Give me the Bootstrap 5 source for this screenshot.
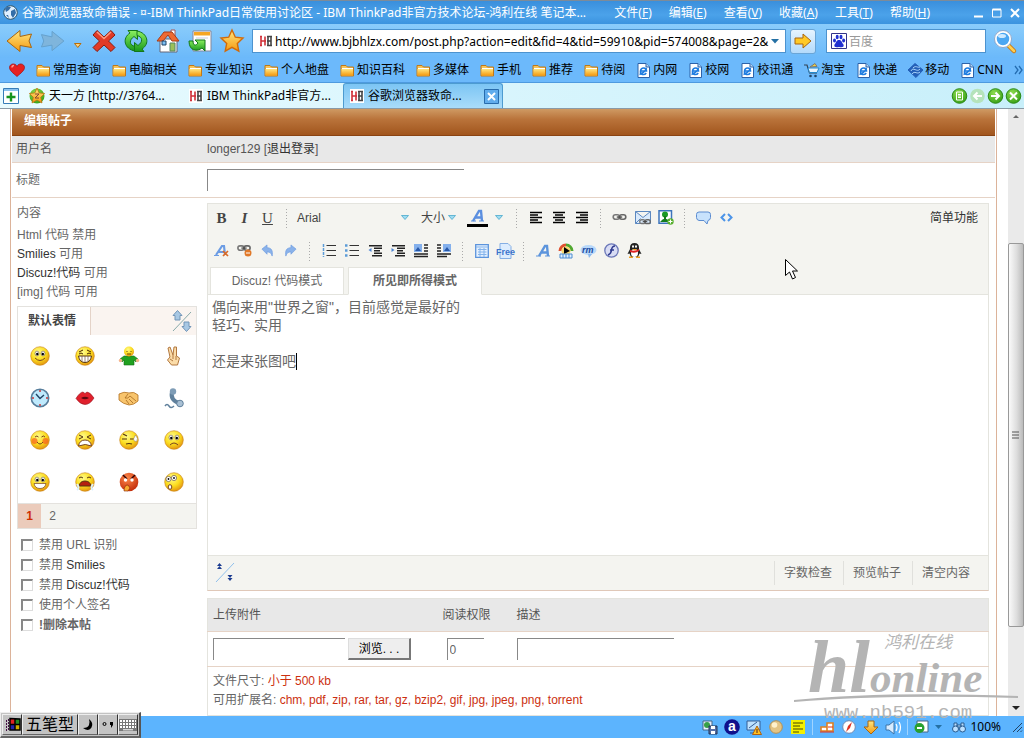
<!DOCTYPE html>
<html lang="zh-CN">
<head>
<meta charset="utf-8">
<meta name="viewport" content="width=device-width, initial-scale=1">
<title>谷歌浏览器致命错误</title>
<link rel="stylesheet" href="https://cdn.jsdelivr.net/npm/bootstrap@5.3.0/dist/css/bootstrap.min.css">
<style>
:root{--ui:"Noto Sans","Noto Sans CJK SC",sans-serif;--page:"Liberation Sans","Noto Sans CJK SC",sans-serif}
body{font:12px/18px var(--page);color:#666;background:#fff;height:100vh;overflow:hidden}
svg{display:block;flex:none;overflow:visible}
a{color:inherit;text-decoration:none}
button{padding:0;border:0;background:none;color:inherit;font:inherit;display:flex;align-items:center;justify-content:center}
input{font:inherit;color:inherit}
.chrome{font-family:var(--ui);color:#000;white-space:nowrap}
.titlebar{height:24px;background:linear-gradient(#3a8fdc,#4ba2ea 60%,#3b93df);color:#fff;border-top:1px solid #7d8b99;padding:0 4px 0 3px}
.titlebar h1{font-size:12px;line-height:18px;font-weight:400;margin:0}
.menus{gap:17px;margin-right:44px}
.tools{height:34px;background:linear-gradient(#8accfb,#6bb9fa);padding:0 8px 0 4px}
.tool{width:32px;height:32px}
.history{width:20px;margin-top:8px}
.address{border:1px solid #4c93cf;background:#fff;height:24px;padding:0 6px;min-width:0}
.address input{border:0;outline:0;background:none;min-width:0;font-size:12px;height:20px;padding:0 2px}
.address input::placeholder{color:#999}
.search{width:160px;padding-left:4px;margin-left:6px}
.go{width:26px;height:25px;border:1px solid #6aa5d6;border-radius:3px;background:linear-gradient(#e6f4ff,#b3dafb)}
.links{height:25px;background:#6cb9fb;padding-left:9px;border-bottom:1px solid #4e9adf}
.links a{gap:2px;margin-right:11px}
.tabs{height:26px;background:linear-gradient(90deg,#e8fbff,#c8effa);border-bottom:1px solid #8a9aa6;padding:0 3px}
.wtab{width:160px;height:25px;padding:0 3px 0 6px;gap:4px}
.wtab.on{background:linear-gradient(#7cc5f4,#a9dcfa);border:1px solid #4d9bd0;border-bottom:0;border-radius:3px 3px 0 0}
.doc{flex:1 1 0;min-height:0;overflow:hidden}
.sheet{margin:0 11px 0 10px;border:solid #dcb39a;border-width:0 1px;padding:0 1px}
.sheet h2{margin:0;height:27px;padding:0 12px;font-size:12px;line-height:24px;font-weight:700;color:#fff;background:linear-gradient(#cf9a63,#b9733a 40%,#a1551d);border-bottom:1px solid #8a4312}
.rule{border-bottom:1px solid #e6d3c6}
.name-col{flex:0 0 195px;padding-left:4px}
aside.name-col{padding:6px 0 0 5px}
.inset{border:solid #888;border-width:1px 0 0 1px;border-radius:0;background:#fff;outline:0;height:22px;padding:2px}
.hint{line-height:19px}
.dark{color:#333}
.smilies{width:180px;border:1px solid #e4e2de;margin-top:4px}
.smilies header{height:28px;background:#faf4f0;padding-right:4px}
.smilies header b{background:#fff;padding:5px 10px;width:73px;height:28px;border-right:1px solid #e4d3c8;color:#444}
.faces{display:grid;grid-template-columns:repeat(4,1fr);grid-auto-rows:42px}
.faces button{height:42px}
.pager{height:25px;background:#f4f4f0;border-top:1px solid #e4e2de}
.pager a{width:23px;text-align:center;line-height:24px}
.pager .on{background:#ebcbbb;color:#d03000;font-weight:700}
.opts{margin-top:6px;padding-left:4px}
.opt{height:20px;gap:6px}
.opt input{appearance:none;width:12px;height:12px;margin:0;border:1px solid #ddd;border-top:2px solid #888;border-left:2px solid #888;background:#fff}
.editor{margin-top:5px;border:1px solid #e4e4de;border-bottom-color:#e0c8b8}
.head{background:#f4f4f0;padding:0 6px 0 2px;border-bottom:1px solid #e4e4de}
.brow{height:27px}
.brow.second{height:33px;margin-top:3px}
.brow button{width:23px;height:24px}
.brow .sep{width:15px;height:20px;display:flex;justify-content:center}
.sep::before{content:"";width:4px;background:radial-gradient(circle,#aaa 35%,transparent 40%) 0 0/3px 3px}
.brow .dd{justify-content:space-between;color:#444}
.brow .font-dd{width:121px;padding:0 6px 0 3px}
.brow .size-dd{width:43px;padding:0 2px 0 6px}
.brow .tint{width:20px}
.serif{font-family:"Liberation Serif",serif;font-size:15px;color:#444}
.mode{height:28px;margin-bottom:-1px;width:134px;line-height:28px;text-align:center;background:#fff;border:1px solid #e4e4de}
.mode.on{border-bottom-color:#fff;font-weight:700}
.canvas{height:260px;padding:3px 4px;font-size:14px;line-height:18px;outline:0}
.caret{border-right:1px solid #000;padding-bottom:1px}
.foot{height:35px;background:#f4f4f0;border-top:1px solid #e4e4de;padding:0 7px}
.foot a{padding:3px 9px;border-left:1px solid #e0e0dc;margin-right:2px}
.files{width:100%;margin-top:7px;border:1px solid #e4e4de}
.files th{background:#e8e8e8;font-weight:400;height:33px;padding:0 5px;color:#555}
.files td{height:35px;padding:0 5px;vertical-align:middle}
.files .lim{height:49px;line-height:19px}
.red{color:#cc2f10}
.browse{width:63px;height:22px;background:#eee;color:#000;border:1px solid #ddd;border-right:2px solid #777;border-bottom:2px solid #777}
.vbar{width:16px;background:#eaeaea}
.thumb{height:384px;border:1px solid #999;border-radius:2px;background:linear-gradient(90deg,#fafafa,#ddd 55%,#bbb)}
.cursor{position:absolute;right:190px;top:55px}
.logo{position:absolute;right:0;bottom:16px;z-index:2;pointer-events:none}
.status{height:22px;background:#5cb4fe;padding-right:2px;font-size:12px}
.status .gp{gap:6px}
.divider{border-left:1px solid #a0d4ff;height:16px}
.zoomtext{margin:0 12px 0 4px}
.ime{position:absolute;left:0;bottom:0;height:26px;background:#c3c3c3;border:1px solid #eee;border-right:2px solid #555;border-bottom:2px solid #666;padding:1px;z-index:3}
.ime button{height:21px;width:20px;border:1px solid #eee;border-right-color:#333;border-bottom-color:#666;color:#000}
.ime .wide{width:56px;font-size:16px}
</style>
</head>
<body class="d-flex flex-column position-relative">
<svg width="0" height="0" class="position-absolute" aria-hidden="true">
<defs>
<radialGradient id="yl" cx=".4" cy=".3" r=".75"><stop offset="0" stop-color="#fffb8a"/><stop offset=".55" stop-color="#fbdc1e"/><stop offset="1" stop-color="#e08c10"/></radialGradient>
<radialGradient id="rd" cx=".4" cy=".3" r=".75"><stop offset="0" stop-color="#ff8a4a"/><stop offset="1" stop-color="#c02808"/></radialGradient>
<radialGradient id="gn" cx=".4" cy=".3" r=".8"><stop offset="0" stop-color="#8fdc50"/><stop offset="1" stop-color="#2f9a10"/></radialGradient>
<linearGradient id="gold" x2="0" y2="1"><stop offset="0" stop-color="#ffe680"/><stop offset="1" stop-color="#f59a10"/></linearGradient>
<linearGradient id="grn" x2="0" y2="1"><stop offset="0" stop-color="#8cf060"/><stop offset="1" stop-color="#18981c"/></linearGradient>
<symbol id="folder" viewBox="0 0 15 13"><path d="M1 3V1.500h5L7.500 3H13.500v9H1z" fill="#f7c558" stroke="#c07818"/><path d="M1.500 5H13v6.500H1.500z" fill="url(#gold)"/><path d="M2 4.500h11" stroke="#fff"/></symbol>
<symbol id="ie" viewBox="0 0 15 15"><path d="M2 .5h8l3.500 3.500v10.500H2z" fill="#fff" stroke="#2d62a8"/><path d="M10 .5v3.500h3.500" fill="#bcd8f4" stroke="#2d62a8"/><path d="M4.500 8h6c0-4-5.500-4-6 0s4 4.500 5.700 2M3.500 11.500c3-1 6-4 7-6.500" fill="none" stroke="#1c7be0" stroke-width="1.600"/></symbol>
<symbol id="hl" viewBox="0 0 14 14"><path fill="#fff" d="M0 0h14v14H0z"/><path d="M2 2.500v9M1 2.500h2M1 11.500h2M6 2.500v9M2 7h5" stroke="#d03038" stroke-width="1.600"/><path d="M8 2.500h5M9 2.500v9M12 2v10M8 7h4M8 11.500h5" stroke="#444" stroke-width="1.600"/></symbol>
<symbol id="face" viewBox="0 0 20 20"><circle cx="10" cy="10" r="9.300" fill="url(#yl)" stroke="#c88010" stroke-width=".6"/></symbol>
<symbol id="eyes" viewBox="0 0 20 20"><ellipse cx="7" cy="7.500" rx="2" ry="2.400" fill="#fff" stroke="#654" stroke-width=".6"/><ellipse cx="13" cy="7.500" rx="2" ry="2.400" fill="#fff" stroke="#654" stroke-width=".6"/><circle cx="7.300" cy="8" r="1.200" /><circle cx="12.800" cy="8" r="1.200"/></symbol>
<symbol id="tri" viewBox="0 0 8 5"><path d="M.5 .5h7L4 4.500z" fill="#9fdcf2" stroke="#4aa8cc" stroke-width=".8"/></symbol>
<symbol id="chain" viewBox="0 0 16 10"><rect x="1" y="2" width="7" height="5" rx="2.500" fill="none" stroke="#777" stroke-width="1.800"/><rect x="8" y="2" width="7" height="5" rx="2.500" fill="none" stroke="#666" stroke-width="1.800"/><path d="M5 4.500h6" stroke="#444" stroke-width="1.400"/></symbol>
<symbol id="curve" viewBox="0 0 14 14"><path d="M1 5.500 6.500 1v3c5 0 6.500 3.500 5.500 9-1-3.500-2.500-4.500-5.500-4.500v2.500z" fill="#8ab2ea" stroke="#6c9be0" stroke-width=".7"/></symbol>
</defs>
</svg>

<div class="titlebar chrome d-flex align-items-center">
  <svg width="15" height="15" viewBox="0 0 15 15" class="me-1"><circle cx="7.500" cy="7.500" r="6.800" fill="#dff0ff" stroke="#356"/><path d="M2 4c2-3 4-2 6-2L6 5 3 7zM8 6l4-2 1 4-3 5-2-3zM3 10l2 0 1 3z" fill="#346ea8"/></svg>
  <h1 class="text-truncate">谷歌浏览器致命错误 - ¤-IBM ThinkPad日常使用讨论区 - IBM ThinkPad非官方技术论坛-鸿利在线 笔记本...</h1>
  <nav class="menus d-flex ms-auto"><a href="#">文件(<u>F</u>)</a><a href="#">编辑(<u>E</u>)</a><a href="#">查看(<u>V</u>)</a><a href="#">收藏(<u>A</u>)</a><a href="#">工具(<u>T</u>)</a><a href="#">帮助(<u>H</u>)</a></nav>
  <div class="d-flex gap-2">
    <button aria-label="最小化"><svg width="10" height="10"><path d="M0 8.500h9" stroke="#fff" stroke-width="2"/></svg></button>
    <button aria-label="最大化"><svg width="10" height="10"><path d="M.5 1.500h8.500v7.500H.5z" fill="none" stroke="#fff"/><path d="M.5 1.500H9" stroke="#fff" stroke-width="2"/></svg></button>
    <button aria-label="关闭"><svg width="10" height="10"><path d="m1 1 8 8m0-8L1 9" stroke="#fff" stroke-width="2"/></svg></button>
  </div>
</div>

<div class="tools chrome d-flex align-items-center">
  <button class="tool" aria-label="后退"><svg width="28" height="24" viewBox="0 0 28 24"><path d="M1 12 14 1.500v6l11.500-2.500-2.500 7 2.500 6.500L14 16.500v6z" fill="url(#gold)" stroke="#a86510" stroke-linejoin="round"/></svg></button>
  <button class="tool" aria-label="前进"><svg width="26" height="22" viewBox="0 0 28 24"><path d="M27 12 14 1.500v6L2.500 5 5 12l-2.500 6.500L14 16.500v6z" fill="#7fb5dc" stroke="#629fcb" stroke-linejoin="round"/></svg></button>
  <button aria-label="历史" class="history"><svg width="8" height="5"><path d="M.5.5h6.500L3.800 4.500z" fill="#ffd37a" stroke="#b86c08"/></svg></button>
  <button class="tool" aria-label="停止"><svg width="24" height="24" viewBox="0 0 24 24"><path d="m5 1.500 7 6.500 7-6.500 4 4.500-6.500 6 6.500 6.500-4 4-7-6.500-7 6.500-4-4L7.500 12 1 6z" fill="#e23a26" stroke="#8a1a0c"/><path d="m5 3 7 6.500L19 3" fill="none" stroke="#ff9b80" stroke-width="1.500"/></svg></button>
  <button class="tool" aria-label="刷新"><svg width="24" height="24" viewBox="0 0 24 24"><path d="M11 22C0 20-2 9 6 4L4 1.500h9.500v9L10 7.500C5 11 5 16 11 17.500z" fill="url(#grn)" stroke="#14761a"/><path d="M13 2c11 2 13 13 5 18l2 2.500h-9.500v-9l3.500 3c5-3.500 5-8.500-1-10z" fill="url(#grn)" stroke="#14761a"/></svg></button>
  <button class="tool" aria-label="主页"><svg width="24" height="24" viewBox="0 0 24 24"><path d="M15 1h4v8h-4z" fill="#fff" stroke="#a55"/><path d="M4 10h17v13H4z" fill="#fff" stroke="#667"/><path d="m1 12 7-9h8l7 9h-7l-4-6-5 6z" fill="#ee6a32" stroke="#a83c18"/><path d="M6 12h4v4H6z" fill="#7ec0f4" stroke="#246"/><path d="M14 14h5v8h-5z" fill="#9cc058" stroke="#586"/></svg></button>
  <button class="tool" aria-label="恢复"><svg width="24" height="24" viewBox="0 0 24 24"><path d="M5 2h18v20H5z" fill="#fff" stroke="#889"/><path d="M6 3h16v3.500H6z" fill="#f6a623"/><path d="M8 9h12" stroke="#ccd"/><path d="M1 12c0 10 8 11 13 7l3 3V11H7l3 3c-2 3-5 3-5-2z" fill="url(#grn)" stroke="#14761a"/></svg></button>
  <button class="tool" aria-label="收藏"><svg width="24" height="24" viewBox="0 0 24 24"><path d="m12 1 3.300 7.200 7.700.9-5.700 5.300 1.500 7.800L12 18.400l-6.800 3.800 1.500-7.800L1 9.100l7.700-.9z" fill="url(#gold)" stroke="#d26a08" stroke-width="1.400"/></svg></button>
  <label class="address d-flex align-items-center flex-grow-1 ms-1">
    <svg width="14" height="14"><use href="#hl"/></svg>
    <input class="flex-grow-1" aria-label="地址" value="http://www.bjbhlzx.com/post.php?action=edit&amp;fid=4&amp;tid=59910&amp;pid=574008&amp;page=2&amp;">
    <svg width="8" height="5"><path d="M0 0h8L4 4.500z" fill="#2470a4"/></svg>
  </label>
  <button class="go mx-1" aria-label="转到"><svg width="18" height="16" viewBox="0 0 18 16"><path d="M1 5h8V1l8 7-8 7v-4H1z" fill="#ffc926" stroke="#a86510"/></svg></button>
  <label class="address search d-flex align-items-center">
    <svg width="16" height="16"><path d="M.5.5h15v15H.5z" fill="#fff" stroke="#338"/><g fill="#2030d0"><ellipse cx="3.500" cy="7.500" rx="1.500" ry="2"/><ellipse cx="6.200" cy="4" rx="1.500" ry="2.200"/><ellipse cx="10" cy="4" rx="1.500" ry="2.200"/><ellipse cx="12.600" cy="7.500" rx="1.500" ry="2"/><path d="M8 7c3 0 2.500 2.500 4.500 4.500 1 3-2 3-4.500 2.500-2.500.5-5.500.5-4.500-2.500C5.500 9.500 5 7 8 7"/></g></svg>
    <input class="w-100" aria-label="搜索" placeholder="百度">
  </label>
  <button class="ms-2" aria-label="搜索"><svg width="22" height="23" viewBox="0 0 22 23"><path d="m13 14 7 7" stroke="#c87a18" stroke-width="4.500" stroke-linecap="round"/><path d="m14 15 6 6" stroke="#ffcf50" stroke-width="2.500" stroke-linecap="round"/><circle cx="9" cy="9" r="7.500" fill="#4ba7f2" stroke="#fff" stroke-width="2.500"/><circle cx="9" cy="9" r="8.500" fill="none" stroke="#57a" stroke-width=".6"/><ellipse cx="8" cy="6" rx="4" ry="2" fill="#cfeaff"/></svg></button>
</div>

<nav class="links chrome d-flex align-items-center">
  <a href="#" aria-label="收藏夹" class="d-flex"><svg width="16" height="14"><path d="M8 13.500C4 10 .5 7.500.5 4.500c0-4 6-5 7.500-1 1.500-4 7.500-3 7.500 1 0 3-3.500 5.500-7.500 9" fill="#e62020" stroke="#a00c0c" stroke-width=".7"/><path d="M3 4.500c0-1.500 1-2 2-2" stroke="#ff9a90" fill="none" stroke-width="1.500"/></svg></a>
  <a href="#" class="d-flex align-items-center"><svg width="15" height="13"><use href="#folder"/></svg>常用查询</a>
  <a href="#" class="d-flex align-items-center"><svg width="15" height="13"><use href="#folder"/></svg>电脑相关</a>
  <a href="#" class="d-flex align-items-center"><svg width="15" height="13"><use href="#folder"/></svg>专业知识</a>
  <a href="#" class="d-flex align-items-center"><svg width="15" height="13"><use href="#folder"/></svg>个人地盘</a>
  <a href="#" class="d-flex align-items-center"><svg width="15" height="13"><use href="#folder"/></svg>知识百科</a>
  <a href="#" class="d-flex align-items-center"><svg width="15" height="13"><use href="#folder"/></svg>多媒体</a>
  <a href="#" class="d-flex align-items-center"><svg width="15" height="13"><use href="#folder"/></svg>手机</a>
  <a href="#" class="d-flex align-items-center"><svg width="15" height="13"><use href="#folder"/></svg>推荐</a>
  <a href="#" class="d-flex align-items-center"><svg width="15" height="13"><use href="#folder"/></svg>待阅</a>
  <a href="#" class="d-flex align-items-center"><svg width="15" height="15"><use href="#ie"/></svg>内网</a>
  <a href="#" class="d-flex align-items-center"><svg width="15" height="15"><use href="#ie"/></svg>校网</a>
  <a href="#" class="d-flex align-items-center"><svg width="15" height="15"><use href="#ie"/></svg>校讯通</a>
  <a href="#" class="d-flex align-items-center"><svg width="15" height="15"><path d="M0 2h3l2.500 8H13" fill="none" stroke="#345" stroke-width="1.200"/><path d="M4 5h11l-2 4.500H5.500z" fill="#e8f4ff" stroke="#28c"/><path d="m6 4 5-3.500 2 3z" fill="#f5d23c" stroke="#777"/><circle cx="6.500" cy="13" r="1.300" fill="#246"/><circle cx="11.500" cy="13" r="1.300" fill="#246"/></svg>淘宝</a>
  <a href="#" class="d-flex align-items-center"><svg width="15" height="15"><use href="#ie"/></svg>快递</a>
  <a href="#" class="d-flex align-items-center"><svg width="15" height="15"><path d="M0 7 7 .5 15 7 8 14.500z" fill="#2460b8" stroke="#2460b8" stroke-linejoin="round"/><path d="M3 8c2-5 6 2 9-2M5 5c3-3 4 0 7-1M4 11c3-4 5 1 8-2" fill="none" stroke="#a8d4fc"/></svg>移动</a>
  <a href="#" class="d-flex align-items-center"><svg width="15" height="15"><use href="#ie"/></svg>CNN</a>
  <button class="ms-auto me-1" aria-label="更多"><svg width="9" height="8"><path d="m1 0 3 4-3 4m4-8 3 4-3 4" fill="none" stroke="#246cb0" stroke-width="1.300"/></svg></button>
</nav>

<div class="tabs chrome d-flex align-items-center">
  <button aria-label="新标签" class="me-1"><svg width="16" height="16"><path d="M.5.5h15v15H.5z" fill="#fff" stroke="#357db8"/><path d="M1 2h14" stroke="#8ac2ee" stroke-width="2"/><path d="M8 4.500v9M3.500 9h9" stroke="#18941c" stroke-width="2.400"/></svg></button>
  <a href="#" class="wtab d-flex align-items-center"><svg width="16" height="16"><circle cx="8" cy="8" r="7.500" fill="url(#gn)"/><path d="m8 0 2.200 5 5.500.5-4 3.800 1.300 5.700-5-3-5 3 1.300-5.700-4-3.800L5.800 5z" fill="url(#gold)" stroke="#b86c08" stroke-width=".7"/><path d="M6 6h4l-4 4h4" fill="none" stroke="#843"/></svg>天一方 [http://3764...</a>
  <a href="#" class="wtab d-flex align-items-center"><svg width="14" height="14"><use href="#hl"/></svg>IBM ThinkPad非官方...</a>
  <div class="wtab on d-flex align-items-center"><svg width="14" height="14"><use href="#hl"/></svg><a href="#">谷歌浏览器致命...</a><button class="ms-auto" aria-label="关闭标签"><svg width="15" height="15"><path d="M.5.5h14v14H.5z" fill="#60acec" stroke="#286bac"/><path d="m4 4 7 7m0-7-7 7" stroke="#fff" stroke-width="2"/></svg></button></div>
  <div class="ms-auto d-flex" style="gap:3px">
    <button aria-label="列表"><svg width="15" height="16"><circle cx="7.500" cy="8" r="7.300" fill="url(#gn)" stroke="#2b8a18"/><path d="M4.500 4h6v8h-6zM6 6.500h3M6 8h3M6 9.500h3" fill="none" stroke="#fff"/></svg></button>
    <button aria-label="上一个"><svg width="15" height="16"><circle cx="7.500" cy="8" r="7.300" fill="#b5e3bb"/><path d="M12 8H4m3.500-3.500L4 8l3.500 3.500" fill="none" stroke="#fff" stroke-width="2"/></svg></button>
    <button aria-label="下一个"><svg width="15" height="16"><circle cx="7.500" cy="8" r="7.300" fill="url(#gn)" stroke="#2b8a18"/><path d="M3 8h8M7.500 4.500 11 8l-3.500 3.500" fill="none" stroke="#fff" stroke-width="2"/></svg></button>
    <button aria-label="全部关闭"><svg width="15" height="16"><circle cx="7.500" cy="8" r="7.300" fill="url(#gn)" stroke="#2b8a18"/><path d="m4 4.500 7 7m0-7-7 7" stroke="#fff" stroke-width="2"/></svg></button>
  </div>
</div>

<div class="doc d-flex">
<main class="sheet flex-grow-1">
  <h2>编辑帖子</h2>
  <div class="rule d-flex align-items-center" style="height:27px;background:#e8e8e8;color:#555"><div class="name-col">用户名</div><div>longer129 [<a href="#" class="dark">退出登录</a>]</div></div>
  <div class="rule d-flex align-items-center" style="height:35px"><label class="name-col" for="subject">标题</label><input id="subject" class="inset" style="width:257px"></div>
  <div class="d-flex">
    <aside class="name-col">
      <div class="mb-1">内容</div>
      <div class="hint"><div>Html 代码 禁用</div><div><a href="#" class="dark">Smilies</a> 可用</div><div><a href="#" class="dark">Discuz!代码</a> 可用</div><div>[img] 代码 可用</div></div>
      <section class="smilies">
        <header class="d-flex justify-content-between align-items-center"><b>默认表情</b><svg width="20" height="22"><path d="M1 21 19 2" stroke="#8aa"/><path d="M5.500.5 10 5.500H8V10H3V5.500H1z" fill="#a8c8e4" stroke="#7396b8"/><path d="M14.500 21.500 10 16.500h2V12h5v4.500h2z" fill="#a8c8e4" stroke="#7396b8"/></svg></header>
        <div class="faces">
          <button aria-label="微笑"><svg width="20" height="20"><use href="#face"/><use href="#eyes"/><path d="M5 12q5 5 10 0" fill="none" stroke="#742"/></svg></button>
          <button aria-label="大笑"><svg width="20" height="20"><use href="#face"/><path d="m4 6 4-2m8 2-4-2M4 8q2-2 4 0m4 0q2-2 4 0" fill="none" stroke="#420"/><path d="M3.500 10h13q-1 6.500-6.500 6.500T3.500 10" fill="#fff" stroke="#531"/><path d="M7 10v6m3-6v6m3-6v6" stroke="#753" stroke-width=".7"/></svg></button>
          <button aria-label="拥抱"><svg width="20" height="20"><path d="M5 10h10l4 3-2 3-2-2v5H5v-5l-2 2-2-3z" fill="#20a020" stroke="#107010" stroke-width=".6"/><circle cx="10" cy="5.500" r="5" fill="url(#yl)"/><circle cx="1.500" cy="14.500" r="1.700" fill="#f7b48c"/><circle cx="18.500" cy="14.500" r="1.700" fill="#f7b48c"/><path d="M8 5v1m4-1v1M8 8h4" stroke="#420" stroke-width=".8"/></svg></button>
          <button aria-label="胜利"><svg width="16" height="20"><path d="M4 11 2 2l2-1 3 8 1-8h2.500v9l3 2-2 7H5.500L1.500 14z" fill="#fbdca8" stroke="#b27840"/><path d="M7 9v4m3-3v4m-6-1 3 2" fill="none" stroke="#b27840"/></svg></button>
          <button aria-label="时间"><svg width="20" height="20"><circle cx="10" cy="10" r="8.700" fill="#bfeafd" stroke="#577e9c" stroke-width="1.600"/><path d="m6 6 4 4.500L14 7" fill="none" stroke="#246" stroke-width="1.400"/><path d="M10 2v2m0 12v2M2 10h2m12 0h2" stroke="#c33" stroke-width="1.500"/></svg></button>
          <button aria-label="亲吻"><svg width="20" height="20"><path d="M1 10.500Q5 4 8 4l2 1.500L12 4q3 0 7 6-4 6.500-9 6.500T1 10.500" fill="#e0202c" stroke="#94101c" stroke-width=".6"/><path d="M6 10q4-2.500 8 0-4 2.500-8 0" fill="#5c0810"/></svg></button>
          <button aria-label="握手"><svg width="20" height="20"><path d="M0 6q5-3 10-1 5-2 9 2v6q-4 4-9 4-6-1-10-5z" fill="#f8c46c" stroke="#b07020" stroke-width=".8"/><path d="M9 6 6 10q3 1 5-2l6 5M10 11l4 4m-7-3 3 4" fill="none" stroke="#a66a20" stroke-width=".8"/></svg></button>
          <button aria-label="电话"><svg width="20" height="20"><path d="M8 4q-2 8 7 11" fill="none" stroke="#60809c" stroke-width="4"/><circle cx="9" cy="3.500" r="3.200" fill="#7e9cb6"/><circle cx="16" cy="15.500" r="3.300" fill="#a9c0d4" stroke="#60809c"/><path d="M1 18q2-3 4 0t5 0" fill="none" stroke="#60809c" stroke-width="1.500"/></svg></button>
          <button aria-label="害羞"><svg width="20" height="20"><use href="#face"/><circle cx="4.500" cy="11" r="3" fill="#f66020" opacity=".7"/><circle cx="15.500" cy="11" r="3" fill="#f66020" opacity=".7"/><path d="M5 7q2-2 3.500 0m3 0q2-2 3.500 0M7 12q3 4 6 0" fill="none" stroke="#742"/></svg></button>
          <button aria-label="大叫"><svg width="20" height="20"><use href="#face"/><path d="m4 5 4 2-4 2m12-4-4 2 4 2" fill="none" stroke="#531"/><path d="M3.500 16q1-6 6.500-6t6.500 6q-6-3-13 0" fill="#fff" stroke="#742"/></svg></button>
          <button aria-label="流汗"><svg width="20" height="20"><use href="#face"/><path d="m4 4 4 2M3 9h5m3 0h4M7 14q3-1 6 0" fill="none" stroke="#531" stroke-width="1.200"/><path d="M16.500 5q3.500 4 1 6.500-3 0-3-2.500z" fill="#fff" stroke="#875" stroke-width=".5"/></svg></button>
          <button aria-label="难过"><svg width="20" height="20"><use href="#face"/><use href="#eyes"/><path d="M6 15q4-4 8 0" fill="none" stroke="#742"/></svg></button>
          <button aria-label="开心"><svg width="20" height="20"><use href="#face"/><use href="#eyes"/><path d="M4 11.500h12q-1 5-6 5t-6-5" fill="#fff" stroke="#742" stroke-width=".7"/></svg></button>
          <button aria-label="大哭"><svg width="20" height="20"><use href="#face"/><path d="M4 6q2-2 4 0m4 0q2-2 4 0" fill="none" stroke="#531"/><path d="M4 14q1-5 6-5t6 5z" fill="#b52010" stroke="#531"/><path d="M2 12q3 4 0 6m16-6q-3 4 0 6" fill="none" stroke="#d9f0ff" stroke-width="2"/></svg></button>
          <button aria-label="愤怒"><svg width="20" height="20"><circle cx="10" cy="10" r="9.300" fill="url(#rd)"/><path d="m4 3 4 4m8-4-4 4" stroke="#300" stroke-width="1.500"/><circle cx="6.500" cy="8" r="1.700" fill="#fff"/><circle cx="13" cy="8" r="1.700" fill="#fff"/><path d="M5 19q0-6 4-6l2 3-2 3z" fill="#f8a830" stroke="#820" stroke-width=".6"/></svg></button>
          <button aria-label="惊讶"><svg width="20" height="20"><use href="#face"/><circle cx="4.500" cy="7" r="2.600" fill="#fff" stroke="#654" stroke-width=".7"/><circle cx="10" cy="6" r="2.600" fill="#fff" stroke="#654" stroke-width=".7"/><circle cx="4.500" cy="7" r=".9"/><circle cx="10" cy="6" r=".9"/><ellipse cx="6" cy="15" rx="1.800" ry="2.300" fill="#fff" stroke="#742"/></svg></button>
        </div>
        <div class="pager d-flex"><a href="#" class="on">1</a><a href="#">2</a></div>
      </section>
      <div class="opts">
        <label class="opt d-flex align-items-center"><input type="checkbox"><span>禁用 URL 识别</span></label>
        <label class="opt d-flex align-items-center"><input type="checkbox"><span>禁用 <a href="#" class="dark">Smilies</a></span></label>
        <label class="opt d-flex align-items-center"><input type="checkbox"><span>禁用 <a href="#" class="dark">Discuz!代码</a></span></label>
        <label class="opt d-flex align-items-center"><input type="checkbox"><span>使用个人签名</span></label>
        <label class="opt d-flex align-items-center"><input type="checkbox"><b>!删除本帖</b></label>
      </div>
    </aside>
    <section class="flex-grow-1" style="margin-right:6px">
      <div class="editor position-relative">
        <div class="head">
          <div class="brow d-flex align-items-center">
            <button class="serif fw-bold">B</button><button class="serif fw-bold fst-italic">I</button><button class="serif text-decoration-underline">U</button><span class="sep"></span>
            <button class="dd font-dd">Arial<svg width="8" height="5"><use href="#tri"/></svg></button>
            <button class="dd size-dd">大小<svg width="8" height="5"><use href="#tri"/></svg></button>
            <button class="ms-2" aria-label="文字颜色"><svg width="21" height="18"><path d="M0 15h21v3H0z"/><path d="m6 12 6-10h2l1 10M8 8.500h6" fill="none" stroke="#5b8fe0" stroke-width="2.400"/><path d="M4 12h5m3 0h5" stroke="#5b8fe0"/></svg></button>
            <button class="tint" aria-label="颜色"><svg width="8" height="5"><use href="#tri"/></svg></button><span class="sep"></span>
            <button aria-label="左对齐"><svg width="12" height="12"><path d="M0 .5h12M0 3h8M0 5.500h12M0 8h8M0 10.500h12" stroke="#000" stroke-width="1.300"/></svg></button>
            <button aria-label="居中"><svg width="12" height="12"><path d="M0 .5h12M2 3h8M0 5.500h12M2 8h8M0 10.500h12" stroke="#000" stroke-width="1.300"/></svg></button>
            <button aria-label="右对齐"><svg width="12" height="12"><path d="M0 .5h12M4 3h8M0 5.500h12M4 8h8M0 10.500h12" stroke="#000" stroke-width="1.300"/></svg></button><span class="sep"></span>
            <button aria-label="链接"><svg width="15" height="9"><use href="#chain"/></svg></button>
            <button aria-label="邮件"><svg width="16" height="14"><path d="M.5.5h15v12H.5zl7.500 6 7.500-6M.5 12.500l5-5" fill="#d9eafc" stroke="#5c88c0"/><svg x="4" y="7" width="12" height="8"><use href="#chain"/></svg></svg></button>
            <button aria-label="图片"><svg width="16" height="15"><path d="M1 .8h12.500v12.500H1z" fill="#fff" stroke="#3c74bc" stroke-width="1.500"/><circle cx="7" cy="4.500" r="3" fill="#1c9a24"/><path d="M2 12q5-7 10 0zM6 6h2v4H6z" fill="#157c1c"/><circle cx="12.500" cy="11.500" r="3.200" fill="#58b030"/><path d="M12.500 9.500v4m-2-2h4" stroke="#fff"/></svg></button><span class="sep"></span>
            <button aria-label="引用"><svg width="15" height="14"><path d="M3 1h9q2.500 0 2.500 2.500v3Q14.500 9 12 9.500L11 13 8 9.500H3Q.5 9 .5 6.500v-3Q.5 1 3 1" fill="#c8e2fc" stroke="#5c8cd0"/></svg></button>
            <button aria-label="代码"><svg width="13" height="9"><path d="M5 1 1.500 4.500 5 8m3-7 3.500 3.500L8 8" fill="none" stroke="#4c94e8" stroke-width="2"/></svg></button>
            <a href="#" class="dark ms-auto me-1">简单功能</a>
          </div>
          <div class="brow second d-flex align-items-center">
            <button aria-label="清除格式"><svg width="16" height="14"><path d="m2 11 6-9h2l1 9M4 8h6" fill="none" stroke="#6c9ce4" stroke-width="2.200"/><path d="M0 11.500h5" stroke="#6c9ce4"/><path d="m9 7 5 5m0-5-5 5" stroke="#d86a28" stroke-width="1.700"/></svg></button>
            <button aria-label="取消链接"><svg width="16" height="13"><svg width="14" height="9"><use href="#chain"/></svg><circle cx="11" cy="9" r="3.500" fill="#e07828"/><path d="M9 9h4" stroke="#fff"/></svg></button>
            <button aria-label="撤销"><svg width="13" height="13"><use href="#curve"/></svg></button>
            <button aria-label="重做"><svg width="13" height="13"><g transform="matrix(-1 0 0 1 13 0)"><use href="#curve" width="13" height="13"/></g></svg></button><span class="sep"></span>
            <button aria-label="编号列表"><svg width="14" height="13"><path d="M4.500 1.500H14m-9.500 5H14m-9.500 5H14" stroke="#333"/><path d="M1.500 0v13" stroke="#5c9cd8" stroke-width="1.500" stroke-dasharray="3 1"/></svg></button>
            <button aria-label="项目列表"><svg width="14" height="13"><path d="M4.500 1.500H14m-9.500 5H14m-9.500 5H14" stroke="#333"/><path d="M0 1.500h2.500M0 6.500h2.500M0 11.500h2.500" stroke="#5c9cd8" stroke-width="2.500"/></svg></button>
            <button aria-label="减少缩进"><svg width="14" height="12"><path d="M1 .7h13M6 3.200h8M6 5.700h6M6 8.200h8M4 10.700h10" stroke="#222" stroke-width="1.400"/><path d="m3.500 3-3 2 3 2z" fill="#4c84d4"/></svg></button>
            <button aria-label="增加缩进"><svg width="14" height="12"><path d="M1 .7h13M6 3.200h8M6 5.700h6M6 8.200h8M4 10.700h10" stroke="#222" stroke-width="1.400"/><path d="m.5 3 3 2-3 2z" fill="#4c84d4"/></svg></button>
            <button aria-label="左浮动"><svg width="14" height="13"><path d="M0 0h8v8H0z" fill="#84b0ec"/><path d="m1 7 3-4 3 4z" fill="#2858a8"/><path d="M10 1h4m-4 3h4m-4 3h4M0 10h14M0 12.500h14" stroke="#222" stroke-width="1.300"/></svg></button>
            <button aria-label="右浮动"><svg width="14" height="13"><path d="M6 0h8v8H6z" fill="#84b0ec"/><path d="m7 7 3-4 3 4z" fill="#2858a8"/><path d="M0 1h4M0 4h4M0 7h4m-4 3h14M0 12.500h10" stroke="#222" stroke-width="1.300"/></svg></button><span class="sep"></span>
            <button aria-label="表格"><svg width="14" height="14"><path d="M.7.7h12.600v12.600H.7z" fill="#e4f0fe" stroke="#5c94dc" stroke-width="1.300"/><path d="M1 3h12M3 5.500h8.500M3 8h8.500M3 10.500h8.500M5 4v9m4-9v9" stroke="#84b4ec"/></svg></button>
            <button aria-label="免费信息"><svg width="18" height="16"><path d="M4 .5h8l3 3v12H4z" fill="#dcecfe" stroke="#84aee4"/><text x="0" y="12" font-size="9" font-weight="700" fill="#3c74cc" font-family="Liberation Sans,sans-serif">Free</text></svg></button><span class="sep"></span>
            <button aria-label="艺术字"><svg width="14" height="12"><path d="m3 11 6-10h2l1 10M5 7.500h6" fill="none" stroke="#5c94dc" stroke-width="2.400"/><path d="M0 11h5m4 0h5" stroke="#5c94dc"/></svg></button>
            <button aria-label="视频"><svg width="16" height="16"><path d="M2 8a6 6 0 0 1 6-6" stroke="#e05030" stroke-width="3" fill="none"/><path d="M8 2a6 6 0 0 1 6 6" stroke="#50a830" stroke-width="3" fill="none"/><circle cx="8" cy="8" r="4.500" fill="#f8d870"/><path d="m6 4 6 4-6 3z"/><path d="M2 11h12v4H2z" fill="#e0f0ff" stroke="#4c8cd0"/><path d="M5 11v4m3-4v4m3-4v4" stroke="#4c8cd0"/></svg></button>
            <button aria-label="rm"><svg width="17" height="14"><ellipse cx="8.500" cy="6" rx="8" ry="5" fill="#b8d8fa"/><path d="m8 10 1 4 3-4z" fill="#8ab8ec"/><text x="2" y="9" font-size="9" font-weight="700" font-style="italic" fill="#1c4ca0" font-family="Liberation Sans,sans-serif">rm</text></svg></button>
            <button aria-label="Flash"><svg width="15" height="15"><circle cx="7.500" cy="7.500" r="6.700" fill="#d8dcf4" stroke="#6c78b8" stroke-width="1.300"/><path d="M11 3Q8 3 7.500 7T4 12m2-5h4" fill="none" stroke="#303c90" stroke-width="1.600"/></svg></button>
            <button aria-label="QQ"><svg width="15" height="15"><path d="M7.500 0q5 0 4.500 6l2.500 5-2-.5L11 14H4l-1.500-3.500-2 .5L3 6q-.5-6 4.500-6" fill="#222"/><ellipse cx="7.500" cy="10" rx="3.500" ry="4" fill="#fff"/><ellipse cx="6" cy="3.500" rx="1" ry="1.300" fill="#fff"/><ellipse cx="9" cy="3.500" rx="1" ry="1.300" fill="#fff"/><path d="M3 7q5 2 9-1v2q-4 3-9 1z" fill="#d22"/><path d="M5 6h5l-2 1.500zM2 13.500h4v1.500H2zm7 0h4v1.500H9z" fill="#f0a020"/></svg></button>
          </div>
          <div class="d-flex gap-1"><button class="mode">Discuz! 代码模式</button><button class="mode on">所见即所得模式</button></div>
        </div>
        <div class="canvas" contenteditable="true" role="textbox" aria-label="内容"><div>偶向来用"世界之窗"，目前感觉是最好的</div><div>轻巧、实用</div><div><br></div><div><span class="caret">还是来张图吧</span></div></div>
        <div class="foot d-flex align-items-center">
          <svg width="20" height="22"><path d="M1 20 19 1" stroke="#90c0ec"/><path d="m4.500 1 2.500 3H2zm0 3 2.500 3H2zM15 19l2.500-3h-5zm0-3 2.500-3h-5z" fill="#1c3c90"/></svg>
          <nav class="ms-auto d-flex"><a href="#">字数检查</a><a href="#">预览帖子</a><a href="#">清空内容</a></nav>
        </div>
        <svg class="cursor" width="13" height="21"><path d="M.5.5v16l4-3.500 3 7 3-1.500-3-6.500h5z" fill="#fff" stroke="#000"/></svg>
      </div>
      <table class="files">
        <colgroup><col style="width:230px"><col style="width:74px"><col></colgroup>
        <thead><tr class="rule"><th>上传附件</th><th>阅读权限</th><th>描述</th></tr></thead>
        <tbody>
          <tr class="rule"><td><div class="d-flex"><input class="inset" aria-label="上传附件" style="width:132px"><button class="browse" style="margin-left:3px">浏览. . .</button></div></td><td><input class="inset ms-1" aria-label="阅读权限" value="0" style="width:37px"></td><td><input class="inset" aria-label="描述" style="width:157px"></td></tr>
          <tr><td colspan="3" class="lim">文件尺寸: <span class="red">小于 500 kb</span><br>可用扩展名: <span class="red">chm, pdf, zip, rar, tar, gz, bzip2, gif, jpg, jpeg, png, torrent</span></td></tr>
        </tbody>
      </table>
    </section>
  </div>
</main>
<div class="vbar d-flex flex-column" aria-hidden="true">
  <svg width="16" height="134"><path d="m5 9 3-3 3 3z" fill="#666"/></svg>
  <div class="thumb d-flex align-items-center justify-content-center"><svg width="8" height="9"><path d="M0 1h7M0 4h7M0 7h7" stroke="#555"/></svg></div>
  <svg class="mt-auto mb-1" width="16" height="7"><path d="m4 1 4 4 4-4z" fill="#222"/></svg>
</div>
</div>
<svg class="logo" width="230" height="90" fill="#b4b4b4" aria-label="hlonline"><g font-family="Liberation Serif,serif" font-style="italic" font-weight="700"><text x="14" y="60" font-size="74">hl</text><text x="76" y="60" font-size="43">online</text></g><path d="M0 68q90-9 224-4v2q-130-4-224 4z"/><text x="90" y="16" font-size="17" font-family="Noto Sans CJK SC,sans-serif" font-style="italic">鸿利在线</text><text x="30" y="86" font-size="19" font-family="Liberation Mono,monospace">www.nb591.com</text></svg>

<footer class="status chrome d-flex align-items-center justify-content-end">
  <div class="d-flex align-items-center gp">
    <svg width="16" height="15"><path d="M1 1h9v9H1z" fill="#e8f0ff" stroke="#468"/><circle cx="5" cy="5" r="3" fill="#38a048"/><path d="M7 6h8v8H7z" fill="#5570a8" stroke="#235"/><path d="M9 6h4v3H9zm0 5h4v3H9z" fill="#fff"/></svg>
    <svg width="16" height="16"><circle cx="8" cy="8" r="7.800" fill="#10108c"/><text x="4" y="12" font-size="14" font-weight="700" fill="#fff" font-family="Liberation Sans,sans-serif">a</text></svg>
    <svg width="16" height="15"><path d="M1 1h13v9H1z" fill="#bfe2ff" stroke="#345c94"/><path d="M4 13h6M3 8l8-6" stroke="#345c94"/><path d="m11 6 4.500 8.500h-9z" fill="#ffc020" stroke="#b06010"/><path d="M11 9v4" stroke="#522"/></svg>
    <svg width="16" height="14"><circle cx="8" cy="7" r="6.300" fill="#e4c484" stroke="#b09058"/><circle cx="6.500" cy="5" r="2.800" fill="#fff1cc"/></svg>
    <svg width="16" height="14"><path d="M1 0h14v14H1z" fill="#f4f000"/><path d="M3 3h10M3 6h7M3 9h10M3 12h6" stroke="#474700"/></svg>
    <span class="divider"></span>
    <svg width="16" height="14"><path d="M2 7h6v4H2zM8 3h6v8H8z" fill="#fff" stroke="#e08020" stroke-width="1.600"/><path d="M1 12h14M9 7h5" stroke="#e03020"/></svg>
    <svg width="16" height="14"><circle cx="8" cy="7" r="6.300" fill="#fff" stroke="#7088b0"/><path d="m11 2-2 6-4 4 2-6z" fill="#e03020"/></svg>
    <svg width="16" height="15"><path d="M5 1h6v6h4l-7 7-7-7h4z" fill="url(#gold)" stroke="#a86510"/></svg>
    <svg width="16" height="15"><path d="M1 5h3l5-4v13l-5-4H1z" fill="#d8ecff" stroke="#3d74a8"/><path d="M11 4q2 3 0 7m3-9q3 5 0 11" fill="none" stroke="#fff" stroke-width="1.300"/></svg>
    <span class="divider"></span>
    <svg width="15" height="14"><path d="M3 1h11v11H3z" fill="#fff" stroke="#468"/><circle cx="5.500" cy="8" r="5" fill="#28a030"/><path d="M3 8h5" stroke="#fff" stroke-width="2"/></svg>
    <svg width="7" height="4"><path d="M0 0h7L3.500 4z" fill="#2470a4"/></svg>
    <svg width="14" height="12" class="ms-1"><g fill="#bce0ff" stroke="#2a5c90"><path d="M2 2h3v4H2zm7 0h3v4H9zM5 4h4v2H5z"/><circle cx="3.500" cy="8" r="3"/><circle cx="10.500" cy="8" r="3"/></g></svg>
  </div>
  <span class="zoomtext">100%</span>
  <svg width="9" height="9"><path d="m0 9 9-9M4 9l5-5M7.500 9 9 7.500" stroke="#246"/></svg>
</footer>
<div class="ime d-flex">
  <button aria-label="系统"><svg width="17" height="15"><path d="M6 2h5v5H6z" fill="#d22"/><path d="M11 2h5v5h-5z" fill="#282"/><path d="M6 8h5v5H6z" fill="#22a"/><path d="M11 8h5v5h-5z" fill="#ca0"/><path d="M6 1.500 16 2v11H6zM11 2v11M6 7.500h10" fill="none" stroke="#000" stroke-width="1.500"/><path d="M4.500 2v12M2.500 3v11" stroke="#414" stroke-dasharray="2 1"/></svg></button>
  <button class="wide">五笔型</button>
  <button aria-label="半角"><svg width="12" height="12"><path d="M7 0q5 4 2.500 8.500T1 9q5 0 6-3t0-6"/></svg></button>
  <button aria-label="标点"><svg width="12" height="8"><circle cx="2.500" cy="3" r="1.500" fill="none" stroke="#000"/><path d="M8 1h3v3L9 7V4H8z"/></svg></button>
  <button aria-label="软键盘"><svg width="18" height="12"><path d="M0 0h18v12H0z" fill="#777"/><path d="M1 2h16M1 5h16M1 8h16" stroke="#fff" stroke-width="2" stroke-dasharray="2 1"/><path d="M4 10.800h10" stroke="#fff"/></svg></button>
</div>
<script src="https://cdn.jsdelivr.net/npm/bootstrap@5.3.0/dist/js/bootstrap.bundle.min.js"></script>
</body>
</html>
